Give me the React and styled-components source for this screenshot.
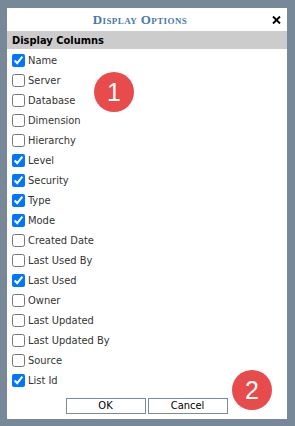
import React from "react";
import styled, { createGlobalStyle } from "styled-components";

const Global = createGlobalStyle`
  html, body { margin: 0; padding: 0; background: #778899; }
  body { font-family: "DejaVu Sans Condensed", "DejaVu Sans", sans-serif; }
  #root { padding: 8px 8px 6px 7px; }
`;

const Panel = styled.div`
  position: relative;
  width: 280px;
  height: 411px;
  background: #ffffff;
  display: flex;
  flex-direction: column;
`;

const TitleRow = styled.div`
  display: flex;
  align-items: center;
  height: 23px;
`;

const Title = styled.div`
  flex: 1;
  text-align: center;
  padding-left: 8px;
  font-family: "Liberation Serif", serif;
  font-variant: small-caps;
  font-weight: bold;
  font-size: 13px;
  letter-spacing: 0.4px;
  color: #4a78b2;
`;

const Close = styled.button`
  width: 22px;
  height: 23px;
  padding: 0;
  border: 0;
  background: transparent;
  display: flex;
  align-items: center;
  justify-content: center;
`;

const SectionBar = styled.div`
  height: 18px;
  background: #cccccc;
  display: flex;
  align-items: center;
  padding-left: 5px;
  font-weight: bold;
  font-size: 11px;
  color: #000;
`;

const List = styled.div`
  display: flex;
  flex-direction: column;
  padding-top: 1px;
`;

const Row = styled.label`
  display: flex;
  align-items: center;
  height: 20px;
  font-size: 11px;
  color: #333;
`;

const Box = styled.input`
  width: 13px;
  height: 13px;
  margin: 0 3px 0 5px;
`;

const Footer = styled.div`
  display: flex;
  justify-content: center;
  gap: 2px;
  margin-top: 8px;
  padding-right: 1px;
`;

const Btn = styled.button`
  width: 80px;
  height: 16px;
  padding: 0;
  border: 1px solid #7a8a99;
  background: #ffffff;
  font-family: "DejaVu Sans Condensed", "DejaVu Sans", sans-serif;
  font-size: 11px;
  color: #000;
  line-height: 14px;
`;

const Badge = styled.div`
  position: absolute;
  width: 40px;
  height: 40px;
  border-radius: 50%;
  background: #e84b4b;
  color: #fff;
  display: flex;
  align-items: center;
  justify-content: center;
  font-family: "Liberation Sans", Arial, sans-serif;
  font-size: 25px;
  left: ${(p) => p.$x}px;
  top: ${(p) => p.$y}px;
`;

const items = [
  ["Name", true],
  ["Server", false],
  ["Database", false],
  ["Dimension", false],
  ["Hierarchy", false],
  ["Level", true],
  ["Security", true],
  ["Type", true],
  ["Mode", true],
  ["Created Date", false],
  ["Last Used By", false],
  ["Last Used", true],
  ["Owner", false],
  ["Last Updated", false],
  ["Last Updated By", false],
  ["Source", false],
  ["List Id", true],
];

export default function App() {
  return (
    <>
      <Global />
      <Panel>
        <TitleRow>
          <Title>Display Options</Title>
          <Close aria-label="Close">
            <svg width="9" height="8" viewBox="0 0 9 8">
              <path d="M1 0.5 L8 7.5 M8 0.5 L1 7.5" stroke="#000" strokeWidth="1.9" />
            </svg>
          </Close>
        </TitleRow>
        <SectionBar>Display Columns</SectionBar>
        <List>
          {items.map(([name, checked]) => (
            <Row key={name}>
              <Box type="checkbox" defaultChecked={checked} />
              {name}
            </Row>
          ))}
        </List>
        <Footer>
          <Btn>OK</Btn>
          <Btn>Cancel</Btn>
        </Footer>
        <Badge $x={87} $y={64}>1</Badge>
        <Badge $x={225} $y={362}>2</Badge>
      </Panel>
    </>
  );
}
